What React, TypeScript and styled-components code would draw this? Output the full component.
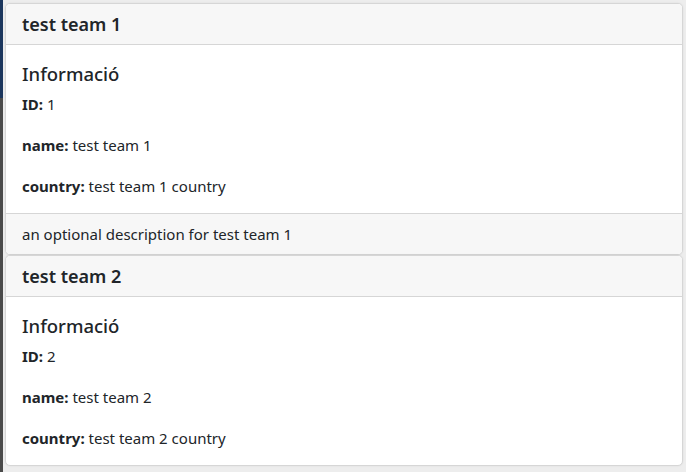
import React from "react";
import styled, { createGlobalStyle } from "styled-components";

const Global = createGlobalStyle`
  html, body { margin: 0; padding: 0; }
  body {
    background: #ededed;
    font-family: "Noto Sans", "Open Sans", sans-serif;
    color: #212529;
    width: 686px;
    height: 472px;
    overflow: hidden;
  }
`;

const Page = styled.div`
  display: flex;
  height: 472px;
`;

const Sidebar = styled.div`
  width: 3px;
  flex: none;
  background: linear-gradient(to bottom, #1b365d 0, #1b365d 98px, #4a4a4a 98px, #4a4a4a 100%);
`;

const Main = styled.main`
  flex: 1;
  padding: 3px 3px 0 2px;
  display: flex;
  flex-direction: column;
`;

const Card = styled.section`
  background: #fff;
  border: 1px solid #d6d6d6;
  border-radius: 5px;
  box-shadow: 0 0 2px rgba(0, 0, 0, 0.08);
  overflow: hidden;
  display: flex;
  flex-direction: column;
`;

const Header = styled.header`
  background: #f7f7f7;
  border-bottom: 1px solid #d6d6d6;
  padding: 9px 16px;
  font-size: 18px;
  font-weight: 600;
  line-height: 22px;
`;

const Body = styled.div`
  padding: 16px 16px;
`;

const Title = styled.h5`
  margin: 0 0 6px;
  font-size: 18.5px;
  font-weight: 500;
  line-height: 26px;
`;

const Field = styled.p`
  margin: 0 0 19px;
  font-size: 15px;
  line-height: 22px;
  &:last-child { margin-bottom: 0; }
`;

const Label = styled.b`
  font-weight: 700;
`;

const Footer = styled.footer`
  background: #f7f7f7;
  border-top: 1px solid #d6d6d6;
  padding: 9px 16px;
  font-size: 15px;
  line-height: 22px;
`;

type Team = { id: number; name: string; country: string; description?: string };

const teams: Team[] = [
  { id: 1, name: "test team 1", country: "test team 1 country", description: "an optional description for test team 1" },
  { id: 2, name: "test team 2", country: "test team 2 country" },
];

function TeamCard({ team }: { team: Team }) {
  return (
    <Card>
      <Header>{team.name}</Header>
      <Body>
        <Title>Informació</Title>
        <Field><Label>ID:</Label> {team.id}</Field>
        <Field><Label>name:</Label> {team.name}</Field>
        <Field><Label>country:</Label> {team.country}</Field>
      </Body>
      {team.description && <Footer>{team.description}</Footer>}
    </Card>
  );
}

export default function App() {
  return (
    <>
      <Global />
      <Page>
        <Sidebar />
        <Main>
          {teams.map((t) => (
            <TeamCard key={t.id} team={t} />
          ))}
        </Main>
      </Page>
    </>
  );
}
